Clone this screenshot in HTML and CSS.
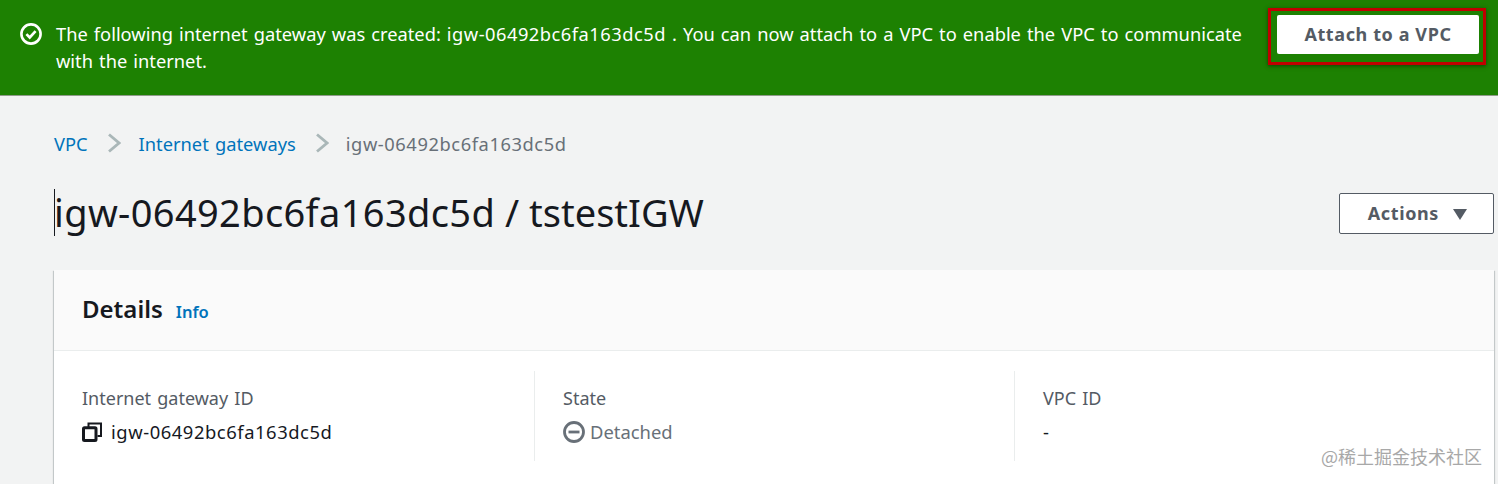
FILE: index.html
```html
<!DOCTYPE html>
<html lang="en">
<head>
    <meta charset="UTF-8">
    <title>igw-06492bc6fa163dc5d / tstestIGW</title>
    <link rel="stylesheet" href="styles.css">
</head>
<body>

    <div class="flash">
        <svg class="flash-icon" viewBox="0 0 22 22" width="22" height="22">
            <circle cx="11" cy="11" r="9.6" fill="none" stroke="#fff" stroke-width="2.6"/>
            <path d="M6.4 11.2l3.3 3.3 5.9-6.4" fill="none" stroke="#fff" stroke-width="2.6"/>
        </svg>
        <div class="flash-text">The following internet gateway was created: <span class="id">igw-06492bc6fa163dc5d</span> . You can now attach to a VPC to enable the VPC to communicate with the internet.</div>
        <div class="flash-action">
            <button class="attach-btn">Attach to a VPC</button>
        </div>
    </div>

    <div class="content">
        <div class="breadcrumbs">
            <a href="#">VPC</a>
            <svg class="crumb-sep" viewBox="0 0 14 20" width="14" height="20"><path d="M2 1.5l10 8.5-10 8.5" fill="none" stroke="#aab7b8" stroke-width="2.8"/></svg>
            <a href="#">Internet gateways</a>
            <svg class="crumb-sep" viewBox="0 0 14 20" width="14" height="20"><path d="M2 1.5l10 8.5-10 8.5" fill="none" stroke="#aab7b8" stroke-width="2.8"/></svg>
            <span class="crumb-current">igw-06492bc6fa163dc5d</span>
        </div>

        <div class="title-row">
            <h1><span class="title-id">igw-06492bc6fa163dc5d</span> / tstestIGW</h1>
            <button class="actions-btn">Actions <span class="caret"></span></button>
        </div>

        <div class="card">
            <div class="card-header">
                <h2>Details</h2>
                <a href="#" class="info">Info</a>
            </div>
            <div class="card-body">
                <div class="col">
                    <div class="label">Internet gateway ID</div>
                    <div class="value">
                        <svg viewBox="0 0 20 20" width="20" height="20">
                            <path d="M6.5 5V1.5h12.5V14h-3.5" fill="none" stroke="#16191f" stroke-width="2"/>
                            <rect x="1.5" y="5.8" width="12.5" height="12.7" rx="1" fill="none" stroke="#16191f" stroke-width="3"/>
                        </svg>
                        <span class="id-value">igw-06492bc6fa163dc5d</span>
                    </div>
                </div>
                <div class="col">
                    <div class="label">State</div>
                    <div class="value detached">
                        <svg viewBox="0 0 22 22" width="22" height="22">
                            <circle cx="11" cy="11" r="9.5" fill="none" stroke="#687078" stroke-width="2.8"/>
                            <path d="M5.5 11h11" stroke="#687078" stroke-width="2.8"/>
                        </svg>
                        Detached
                    </div>
                </div>
                <div class="col">
                    <div class="label">VPC ID</div>
                    <div class="value">-</div>
                </div>
            </div>
        </div>
    </div>

    <div class="watermark">@稀土掘金技术社区</div>

</body>
</html>
```

FILE: styles.css
```css
html, body {
    height: 100%;
}
body {
    font-family: "Noto Sans", "Open Sans", sans-serif;
    margin: 0;
    background-color: #f2f3f3;
    color: #16191f;
    overflow: hidden;
    position: relative;
    word-spacing: 1.5px;
}
a {
    color: #0073bb;
    text-decoration: none;
}
.flash {
    display: flex;
    height: 96px;
    box-sizing: border-box;
    background-color: #1d8102;
    color: #fff;
    padding: 20px 12px 0 20px;
    border-bottom: 1px solid #8f9b8a;
}
.flash-icon {
    flex: none;
    margin-top: 3px;
}
.flash-text {
    width: 1190px;
    margin-left: 14px;
    font-size: 18.3px;
    line-height: 27px;
    word-spacing: 1.3px;
}
.id {
    letter-spacing: 0.5px;
}
.flash-action {
    margin-left: auto;
    margin-top: -12px;
    height: 39px;
    padding: 4px 4px 8px 6px;
    border: 3px solid #c00000;
    box-shadow: 0 1px 4px rgba(0, 0, 0, 0.5);
}
.attach-btn {
    display: block;
    width: 202px;
    height: 39px;
    padding: 0 0 2px;
    background: #fff;
    border: none;
    border-radius: 2px;
    color: #545b64;
    font-family: inherit;
    font-size: 18px;
    font-weight: 700;
    letter-spacing: 0.6px;
    word-spacing: 0;
}
.content {
    padding: 0 4px 0 54px;
}
.breadcrumbs {
    display: flex;
    align-items: center;
    height: 28px;
    margin-top: 33px;
    font-size: 18.3px;
}
.crumb-sep {
    margin: 0 18px 0 19px;
}
.crumb-current {
    margin-left: -1px;
    color: #687078;
    letter-spacing: 0.58px;
}
.title-row {
    display: flex;
    justify-content: space-between;
    align-items: center;
    margin-top: 28px;
    height: 54px;
}
h1 {
    position: relative;
    margin: 0;
    font-size: 38px;
    font-weight: 400;
    line-height: 48px;
    word-spacing: 0;
}
.title-id {
    letter-spacing: 0.36px;
}
h1::before {
    content: "";
    position: absolute;
    left: 0;
    top: 1px;
    width: 1px;
    height: 47px;
    background: #16191f;
}
.actions-btn {
    width: 155px;
    height: 41px;
    margin-top: 2px;
    padding: 0 0 0 2px;
    background: #fff;
    border: 1px solid #545b64;
    border-radius: 2px;
    color: #545b64;
    font-family: inherit;
    font-size: 18px;
    font-weight: 700;
    letter-spacing: 0.6px;
}
.caret {
    display: inline-block;
    width: 0;
    height: 0;
    margin-left: 9px;
    border-left: 7px solid transparent;
    border-right: 7px solid transparent;
    border-top: 11px solid #545b64;
}
.card {
    margin-top: 31px;
    background: #fff;
    box-shadow: 0 1px 1px 0 rgba(0, 28, 36, 0.3), 1px 1px 1px 0 rgba(0, 28, 36, 0.15), -1px 1px 1px 0 rgba(0, 28, 36, 0.15);
    height: 214px;
}
.card-header {
    display: flex;
    align-items: baseline;
    height: 81px;
    box-sizing: border-box;
    padding: 22px 28px 0;
    background: #fafafa;
    border-bottom: 1px solid #eaeded;
}
h2 {
    margin: 0;
    font-size: 24px;
    font-weight: 600;
    word-spacing: 0;
}
.info {
    margin-left: 13px;
    font-size: 16.5px;
    font-weight: 600;
}
.card-body {
    display: grid;
    grid-template-columns: repeat(3, 1fr);
    padding-top: 20px;
}
.col {
    height: 90px;
    box-sizing: border-box;
    padding: 14px 28px 0;
}
.col + .col {
    border-left: 1px solid #eaeded;
}
.label {
    color: #545b64;
    font-size: 18px;
    line-height: 26px;
}
.value {
    display: flex;
    align-items: center;
    gap: 9px;
    margin-top: 8px;
    font-size: 18.4px;
    line-height: 26px;
}
.id-value {
    letter-spacing: 0.55px;
}
.detached {
    color: #687078;
    gap: 5px;
}
.watermark {
    position: absolute;
    right: 16px;
    bottom: 16px;
    color: #a8a8a8;
    font-family: "Noto Sans CJK SC", sans-serif;
    font-size: 18px;
    line-height: 24px;
    word-spacing: 0;
}
```
